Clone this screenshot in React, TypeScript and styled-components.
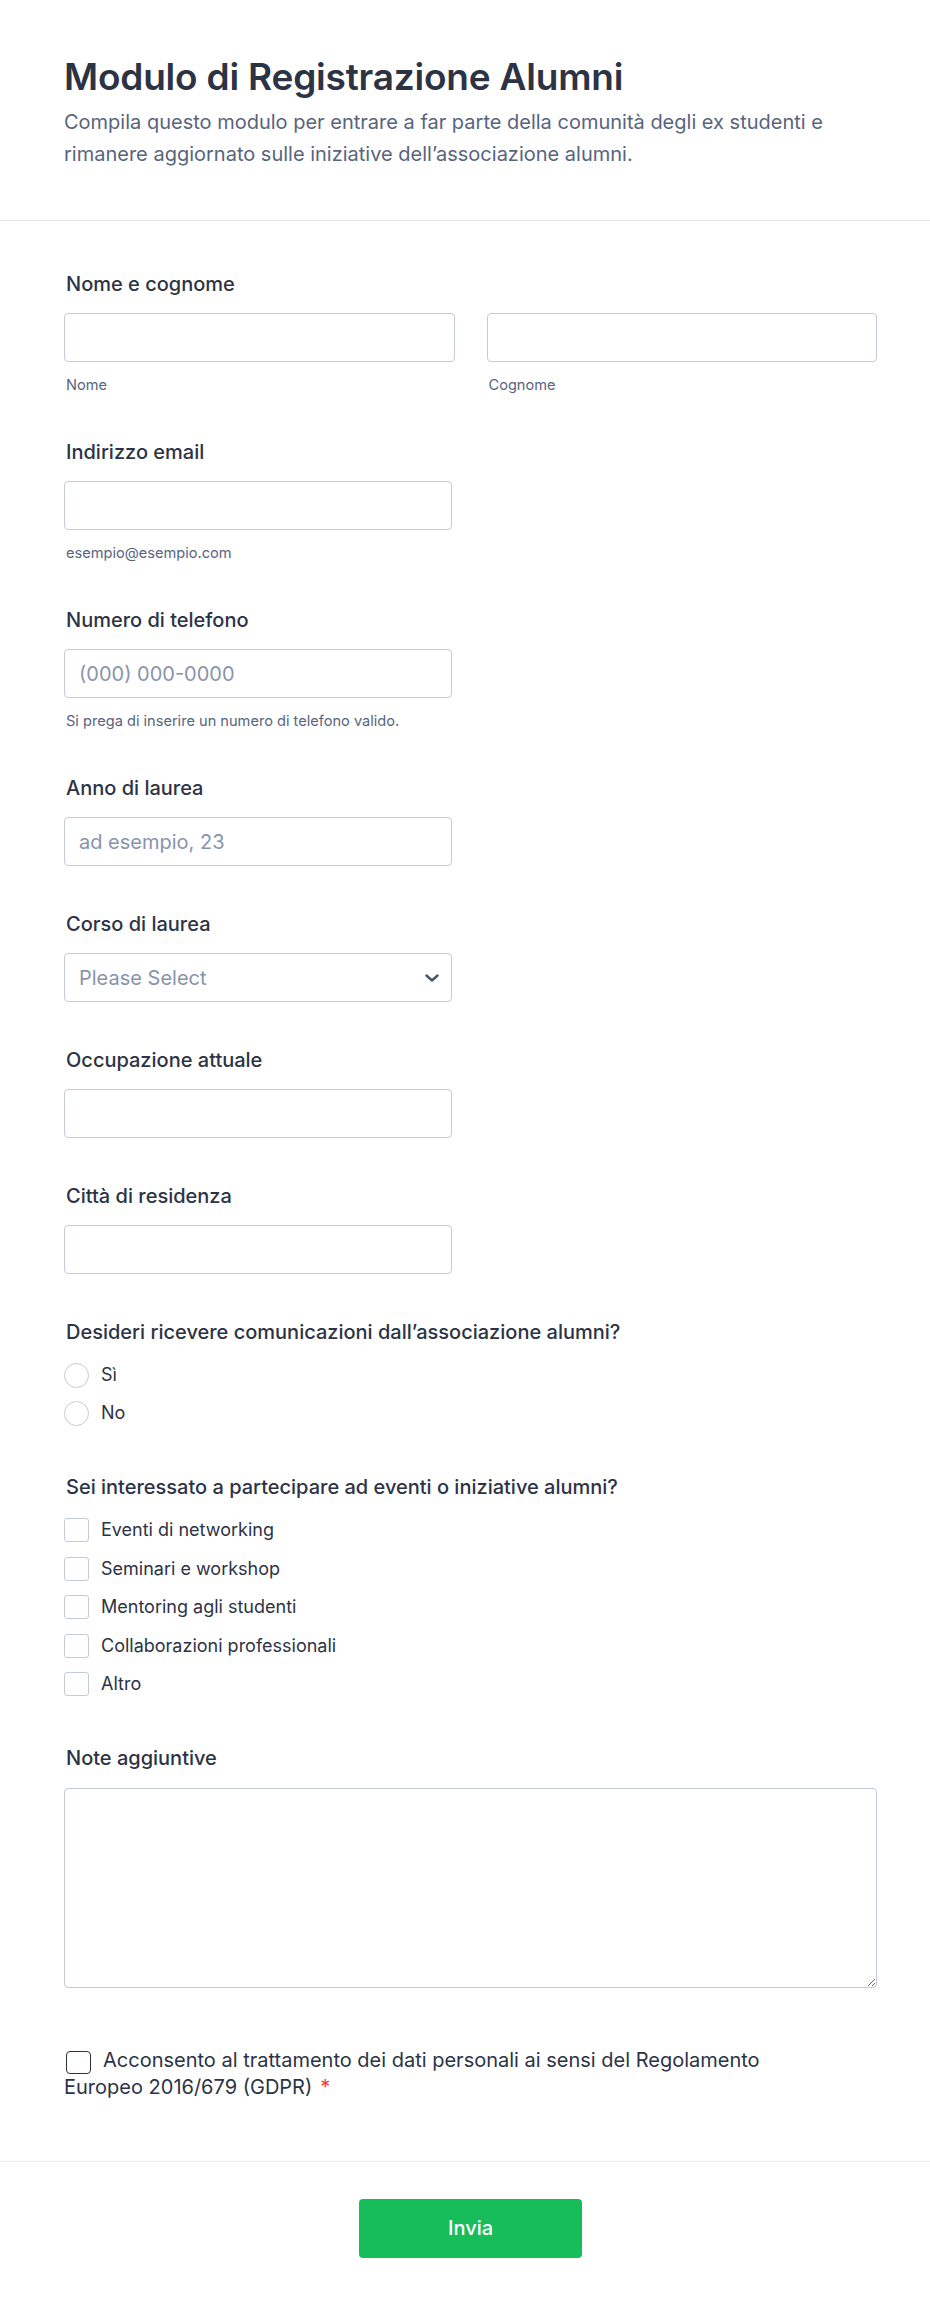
import React from 'react';
import styled, { createGlobalStyle } from 'styled-components';

const GlobalStyle = createGlobalStyle`
  * {
    box-sizing: border-box;
  }
  body {
    margin: 0;
    background: #ffffff;
    font-family: Inter, 'Noto Sans', 'Liberation Sans', sans-serif;
    color: #2c3345;
  }
`;

const Page = styled.div`
  width: 100%;
  background: #ffffff;
`;

const Header = styled.header`
  padding: 53px 53px 50px 64px;
  border-bottom: 1px solid #e3e5ee;
`;

const Title = styled.h1`
  margin: 0;
  font-size: 37px;
  line-height: 48px;
  font-weight: 600;
  letter-spacing: -0.2px;
  color: #2c3345;
`;

const Subtitle = styled.p`
  margin: 6px 0 0;
  font-size: 20px;
  line-height: 31.5px;
  font-weight: 400;
  color: #57647e;
`;

const Body = styled.main`
  padding: 51px 53px 59px 64px;
  display: flex;
  flex-direction: column;
`;

const Field = styled.div<{ $extra?: number; $top?: number }>`
  display: flex;
  flex-direction: column;
  margin-bottom: 46px;
  padding-bottom: ${({ $extra }) => $extra ?? 0}px;
  padding-top: ${({ $top }) => $top ?? 0}px;

  &:last-child {
    margin-bottom: 0;
  }
`;

const Label = styled.div<{ $gap?: number }>`
  padding-left: 2px;
  margin-bottom: ${({ $gap }) => $gap ?? 17}px;
  font-size: 20px;
  line-height: 24px;
  font-weight: 500;
  color: #2c3345;
`;

const Row = styled.div`
  display: grid;
  grid-template-columns: 1fr 1fr;
  column-gap: 32px;
`;

const Column = styled.div`
  display: flex;
  flex-direction: column;
`;

const TextInput = styled.input<{ $full?: boolean }>`
  width: ${({ $full }) => ($full ? '100%' : '388px')};
  height: 49px;
  padding: 0 14px;
  border: 1px solid #c3cad8;
  border-radius: 4px;
  background: #ffffff;
  font-family: inherit;
  font-size: 20px;
  color: #2c3345;
  outline: none;

  &::placeholder {
    color: #8894ab;
  }
`;

const SubLabel = styled.span`
  display: block;
  padding-left: 2px;
  margin-top: 15px;
  font-size: 14.6px;
  line-height: 17px;
  color: #57647e;
`;

const SelectWrap = styled.div`
  position: relative;
  width: 388px;
  height: 49px;
`;

const Select = styled.select`
  appearance: none;
  width: 100%;
  height: 100%;
  padding: 0 40px 0 14px;
  border: 1px solid #c3cad8;
  border-radius: 4px;
  background: #ffffff;
  font-family: inherit;
  font-size: 20px;
  color: #8894ab;
  outline: none;
`;

const Chevron = styled.svg`
  position: absolute;
  right: 13px;
  top: 50%;
  width: 14px;
  height: 8px;
  margin-top: -4px;
  pointer-events: none;
`;

const Options = styled.div`
  display: flex;
  flex-direction: column;
  align-items: flex-start;
  gap: 14.4px;
`;

const Option = styled.label`
  display: flex;
  align-items: center;
  gap: 12px;
  height: 24px;
  font-size: 18px;
  line-height: 24px;
  color: #2c3345;
`;

const Radio = styled.input.attrs({ type: 'radio' })`
  appearance: none;
  margin: 0;
  width: 25px;
  height: 25px;
  flex: none;
  border: 1px solid #c3cad8;
  border-radius: 50%;
  background: #ffffff;
`;

const Check = styled.input.attrs({ type: 'checkbox' })`
  appearance: none;
  margin: 0;
  width: 25px;
  height: 24px;
  flex: none;
  border: 1px solid #c3cad8;
  border-radius: 3px;
  background: #ffffff;
`;

const TextArea = styled.textarea`
  width: 100%;
  height: 200px;
  padding: 12px 14px;
  border: 1px solid #c3cad8;
  border-radius: 4px;
  background: #ffffff;
  font-family: inherit;
  font-size: 20px;
  color: #2c3345;
  outline: none;
  resize: both;
`;

const Consent = styled.label`
  display: block;
  max-width: 700px;
  font-size: 20px;
  line-height: 27.5px;
  color: #2c3345;
`;

const ConsentBox = styled.input.attrs({ type: 'checkbox' })`
  appearance: none;
  display: inline-block;
  vertical-align: top;
  margin: 4px 12px 0 2px;
  width: 25px;
  height: 23px;
  border: 1.5px solid #2c3345;
  border-radius: 4px;
  background: #ffffff;
`;

const Required = styled.span`
  margin-left: 8px;
  color: #f23a3c;
`;

const Footer = styled.footer`
  display: flex;
  justify-content: center;
  padding: 37px 53px 50px 64px;
  border-top: 1px solid #eaebf2;
`;

const Submit = styled.button`
  width: 223px;
  height: 59px;
  border: none;
  border-radius: 4px;
  background: #18bd5b;
  color: #ffffff;
  font-family: inherit;
  font-size: 20px;
  font-weight: 500;
  cursor: pointer;
`;

const interests = [
  'Eventi di networking',
  'Seminari e workshop',
  'Mentoring agli studenti',
  'Collaborazioni professionali',
  'Altro',
];

function App() {
  return (
    <Page>
      <GlobalStyle />
      <Header>
        <Title>Modulo di Registrazione Alumni</Title>
        <Subtitle>
          Compila questo modulo per entrare a far parte della comunità degli ex studenti e
          rimanere aggiornato sulle iniziative dell’associazione alumni.
        </Subtitle>
      </Header>

      <Body>
        <Field>
          <Label>Nome e cognome</Label>
          <Row>
            <Column>
              <TextInput $full />
              <SubLabel>Nome</SubLabel>
            </Column>
            <Column>
              <TextInput $full />
              <SubLabel>Cognome</SubLabel>
            </Column>
          </Row>
        </Field>

        <Field>
          <Label>Indirizzo email</Label>
          <TextInput type="email" />
          <SubLabel>esempio@esempio.com</SubLabel>
        </Field>

        <Field>
          <Label>Numero di telefono</Label>
          <TextInput type="tel" placeholder="(000) 000-0000" />
          <SubLabel>Si prega di inserire un numero di telefono valido.</SubLabel>
        </Field>

        <Field>
          <Label>Anno di laurea</Label>
          <TextInput placeholder="ad esempio, 23" />
        </Field>

        <Field>
          <Label>Corso di laurea</Label>
          <SelectWrap>
            <Select defaultValue="">
              <option value="">Please Select</option>
            </Select>
            <Chevron viewBox="0 0 14 8" fill="none">
              <path
                d="M1.5 1.5L7 6.5L12.5 1.5"
                stroke="#4b5468"
                strokeWidth="2.4"
                strokeLinecap="round"
                strokeLinejoin="round"
              />
            </Chevron>
          </SelectWrap>
        </Field>

        <Field>
          <Label>Occupazione attuale</Label>
          <TextInput />
        </Field>

        <Field>
          <Label>Città di residenza</Label>
          <TextInput />
        </Field>

        <Field $extra={4}>
          <Label $gap={19}>Desideri ricevere comunicazioni dall’associazione alumni?</Label>
          <Options>
            <Option>
              <Radio name="comunicazioni" />
              Sì
            </Option>
            <Option>
              <Radio name="comunicazioni" />
              No
            </Option>
          </Options>
        </Field>

        <Field $extra={4}>
          <Label $gap={19}>Sei interessato a partecipare ad eventi o iniziative alumni?</Label>
          <Options>
            {interests.map((item) => (
              <Option key={item}>
                <Check />
                {item}
              </Option>
            ))}
          </Options>
        </Field>

        <Field>
          <Label $gap={18}>Note aggiuntive</Label>
          <TextArea />
        </Field>

        <Field $top={13}>
          <Consent>
            <ConsentBox />
            Acconsento al trattamento dei dati personali ai sensi del Regolamento Europeo
            2016/679 (GDPR)
            <Required>*</Required>
          </Consent>
        </Field>
      </Body>

      <Footer>
        <Submit type="button">Invia</Submit>
      </Footer>
    </Page>
  );
}

export default App;
